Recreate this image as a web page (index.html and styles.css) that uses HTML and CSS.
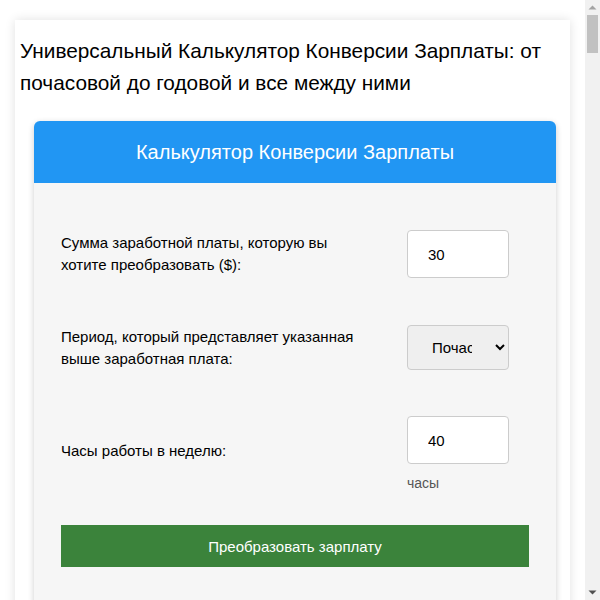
FILE: index.html
```html
<!DOCTYPE html>
<html lang="ru">
<head>
<meta charset="utf-8">
<title>Калькулятор Конверсии Зарплаты</title>
<link rel="stylesheet" href="styles.css">
</head>
<body>
<main class="page">
  <h1 class="title">Универсальный Калькулятор Конверсии Зарплаты: от почасовой до годовой и все между ними</h1>
  <section class="card">
    <header class="card-head">Калькулятор Конверсии Зарплаты</header>
    <div class="card-body">
      <div class="row row-first">
        <label class="label" for="amount">Сумма заработной платы, которую вы хотите преобразовать ($):</label>
        <div class="field"><input class="input" id="amount" type="text" value="30"></div>
      </div>
      <div class="row">
        <label class="label" for="period">Период, который представляет указанная выше заработная плата:</label>
        <div class="field">
          <select class="select" id="period">
            <option>Почасовая</option>
            <option>Ежедневная</option>
            <option>Еженедельная</option>
            <option>Ежемесячная</option>
            <option>Годовая</option>
          </select>
        </div>
      </div>
      <div class="row row-last">
        <label class="label" for="hours">Часы работы в неделю:</label>
        <div class="field">
          <input class="input" id="hours" type="text" value="40">
          <div class="hint">часы</div>
        </div>
      </div>
      <button class="btn" type="button">Преобразовать зарплату</button>
    </div>
  </section>
</main>
<div class="scrollbar" aria-hidden="true">
  <svg class="arrow arrow-up" width="15" height="15" viewBox="0 0 15 15"><path d="M3.5 9.5 L7.5 5.5 L11.5 9.5 Z" fill="#a3a3a3"/></svg>
  <div class="track"><div class="thumb"></div></div>
  <svg class="arrow arrow-down" width="15" height="15" viewBox="0 0 15 15"><path d="M3.5 5.5 L7.5 9.5 L11.5 5.5 Z" fill="#505050"/></svg>
</div>
</body>
</html>
```

FILE: styles.css
```css
html, body {
  margin: 0;
  padding: 0;
  background: #ffffff;
}

body {
  font-family: "Liberation Sans", Arial, sans-serif;
  color: #000;
  padding: 20px 30px 20px 15px;
}

.page {
  background: #ffffff;
  box-shadow: 0 0 10px rgba(0, 0, 0, 0.12);
  padding: 15px 5px 20px 5px;
  min-height: 9040px;
}

.title {
  font-size: 20.8px;
  font-weight: normal;
  line-height: 32px;
  margin: 0 0 22px 0;
}

.card {
  margin: 0 9px 0 14px;
  border-radius: 6px;
  overflow: hidden;
  background: #f6f6f6;
  box-shadow: 0 2px 6px rgba(0, 0, 0, 0.2);
}

.card-head {
  background: #2196f3;
  color: #ffffff;
  text-align: center;
  font-size: 20px;
  line-height: 24px;
  padding: 19px 10px;
}

.card-body {
  padding: 47px 27px 40px 27px;
}

.row {
  display: grid;
  grid-template-columns: 300px 102px;
  column-gap: 46px;
  align-items: center;
  margin-bottom: 46px;
}

.row-first {
  margin-bottom: 47px;
}

.row-last {
  margin-bottom: 40px;
}

.label {
  font-size: 15px;
  line-height: 22px;
}

.field {
  display: flex;
  flex-direction: column;
}

.input {
  box-sizing: border-box;
  width: 102px;
  height: 48px;
  border: 1px solid #cccccc;
  border-radius: 4px;
  background: #ffffff;
  padding: 0 20px;
  font-family: "Liberation Sans", Arial, sans-serif;
  font-size: 15px;
  color: #000;
  margin: 0;
}

.select {
  box-sizing: border-box;
  width: 102px;
  height: 45px;
  border: 1px solid #cccccc;
  border-radius: 4px;
  background-color: #efefef;
  padding: 0 20px;
  font-family: "Liberation Sans", Arial, sans-serif;
  font-size: 15px;
  color: #000;
  margin: 0;
}

.hint {
  font-size: 14px;
  line-height: 16px;
  color: #555555;
  margin-top: 11px;
  margin-bottom: -6px;
}

.btn {
  display: block;
  width: 100%;
  height: 42px;
  border: none;
  border-radius: 0;
  background: #3b833b;
  color: #ffffff;
  font-family: "Liberation Sans", Arial, sans-serif;
  font-size: 15px;
  cursor: pointer;
}

.scrollbar {
  position: fixed;
  top: 0;
  right: 0;
  width: 15px;
  height: 100vh;
  background: #f1f1f1;
  display: flex;
  flex-direction: column;
}

.arrow {
  display: block;
  flex: 0 0 15px;
}

.track {
  flex: 1;
  padding: 0 2px;
}

.thumb {
  height: 38px;
  background: #c1c1c1;
}
```
